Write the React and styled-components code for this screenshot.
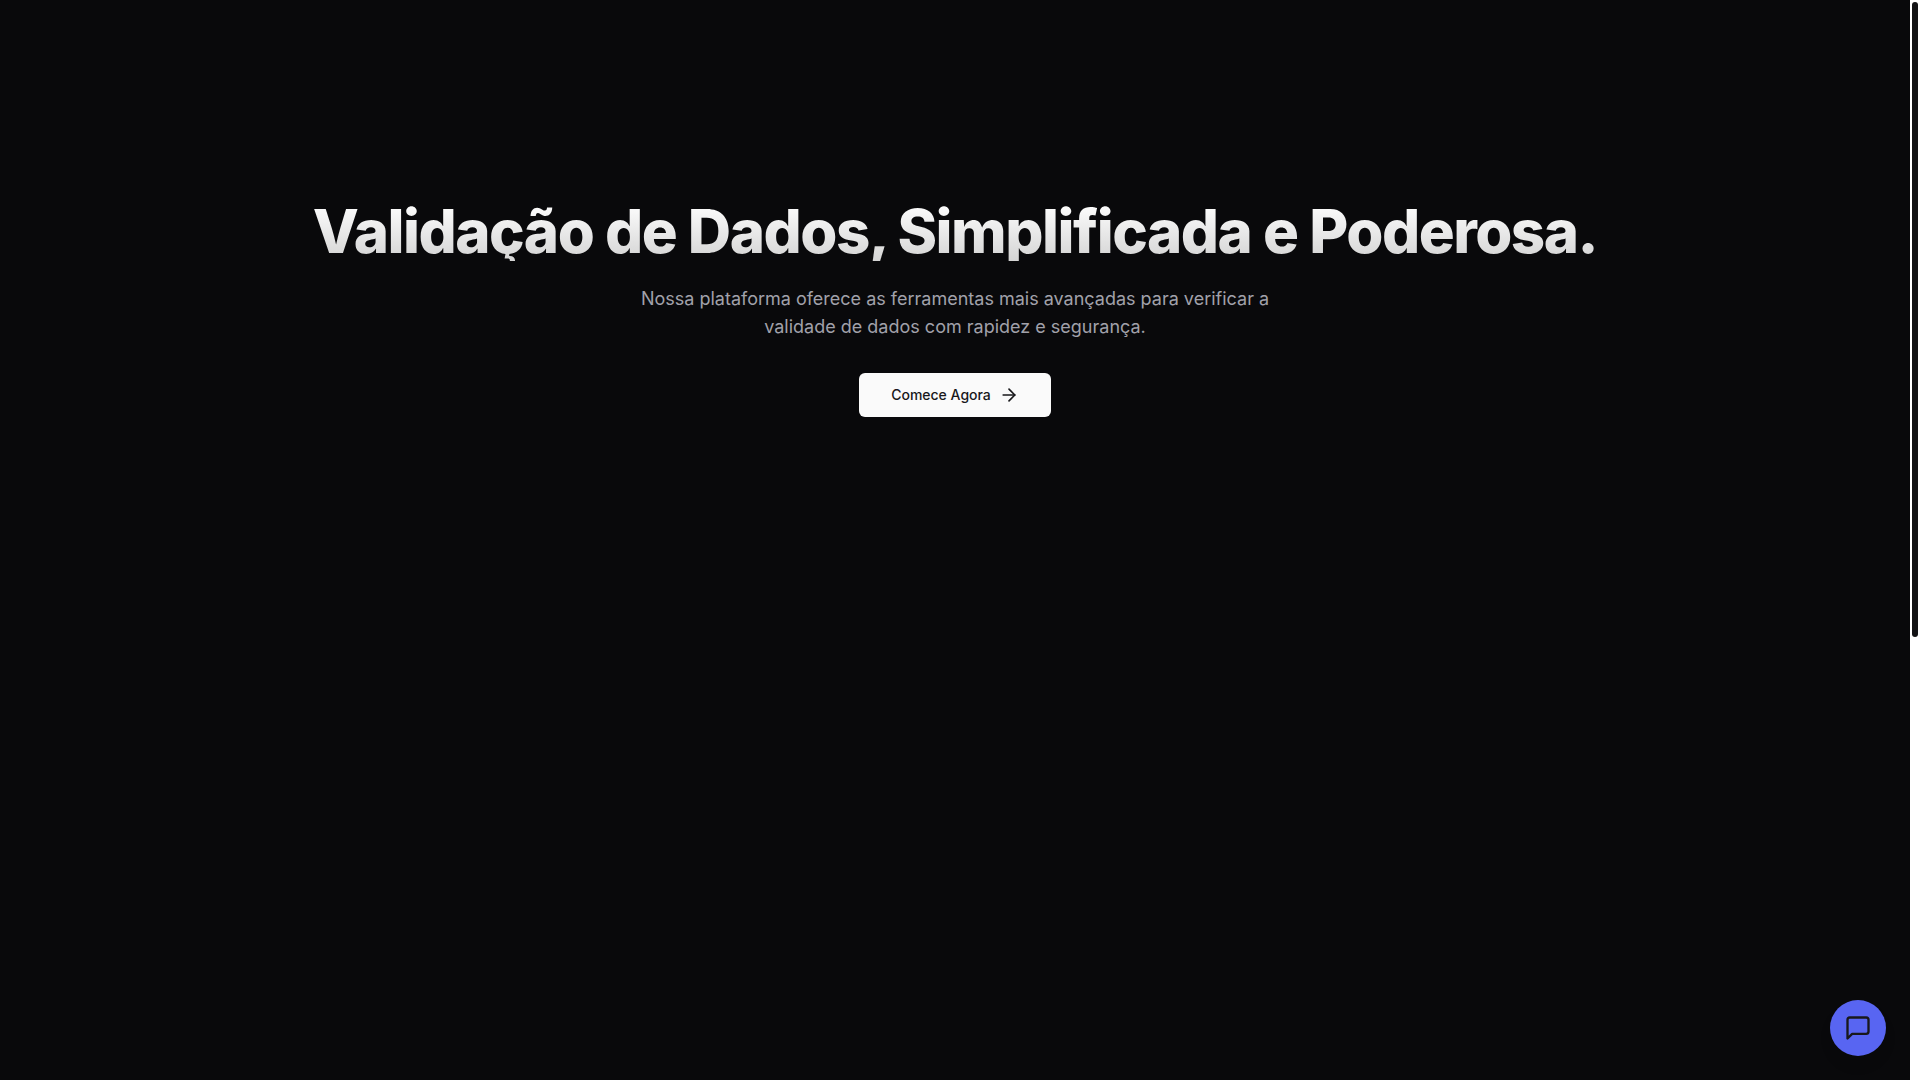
import React from 'react';
import styled, { createGlobalStyle } from 'styled-components';
import { ArrowRight } from 'lucide-react';

const GlobalStyle = createGlobalStyle`
  * {
    box-sizing: border-box;
  }

  body {
    margin: 0;
    background-color: #09090b;
    font-family: Inter, sans-serif;
  }
`;

const Page = styled.div`
  display: flex;
  min-height: 100vh;
  background-color: #09090b;
`;

const Main = styled.main`
  flex: 1;
  min-width: 0;
  padding: 201px 32px 96px;
`;

const Hero = styled.section`
  display: flex;
  flex-direction: column;
  align-items: center;
  text-align: center;
`;

const Title = styled.h1`
  margin: 0 0 24px;
  font-size: 60px;
  line-height: 60px;
  font-weight: 800;
  letter-spacing: -0.025em;
  color: transparent;
  background-image: linear-gradient(to bottom, #ffffff, #d4d4d4);
  -webkit-background-clip: text;
  background-clip: text;
`;

const Description = styled.p`
  max-width: 672px;
  margin: 0 0 32px;
  font-size: 18px;
  line-height: 28px;
  color: #a1a1aa;
`;

const StartButton = styled.button`
  display: inline-flex;
  align-items: center;
  gap: 8px;
  height: 44px;
  padding: 0 32px;
  border: none;
  border-radius: 6px;
  background-color: #fafafa;
  color: #18181b;
  font-family: inherit;
  font-size: 14px;
  line-height: 20px;
  font-weight: 500;
  cursor: pointer;
`;

const ChatButton = styled.button`
  position: fixed;
  right: 34px;
  bottom: 24px;
  display: flex;
  align-items: center;
  justify-content: center;
  width: 56px;
  height: 56px;
  padding: 0;
  border: none;
  border-radius: 50%;
  background-color: #5865f2;
  color: #18181b;
  box-shadow: 0 10px 15px -3px rgba(0, 0, 0, 0.1);
  cursor: pointer;
`;

const ScrollTrack = styled.div`
  width: 10px;
  height: 100vh;
  padding: 2px;
  position: sticky;
  top: 0;
  background-color: #ffffff;
`;

const ScrollThumb = styled.div`
  height: 59%;
  border-radius: 3px;
  background-color: #121214;
`;

function ChatIcon() {
  return (
    <svg
      width="28"
      height="28"
      viewBox="0 0 24 24"
      fill="none"
      stroke="currentColor"
      strokeWidth="2"
      strokeLinecap="round"
      strokeLinejoin="round"
      aria-hidden="true"
    >
      <path d="M21 15a2 2 0 0 1-2 2H7l-4 4V5a2 2 0 0 1 2-2h14a2 2 0 0 1 2 2z" />
    </svg>
  );
}

function App() {
  return (
    <>
      <GlobalStyle />
      <Page>
        <Main>
          <Hero>
            <Title>Validação de Dados, Simplificada e Poderosa.</Title>
            <Description>
              Nossa plataforma oferece as ferramentas mais avançadas para verificar a validade de dados com rapidez e segurança.
            </Description>
            <StartButton type="button">
              Comece Agora
              <ArrowRight size={20} />
            </StartButton>
          </Hero>
        </Main>
        <ScrollTrack>
          <ScrollThumb />
        </ScrollTrack>
      </Page>
      <ChatButton type="button" aria-label="Abrir chat">
        <ChatIcon />
      </ChatButton>
    </>
  );
}

export default App;
